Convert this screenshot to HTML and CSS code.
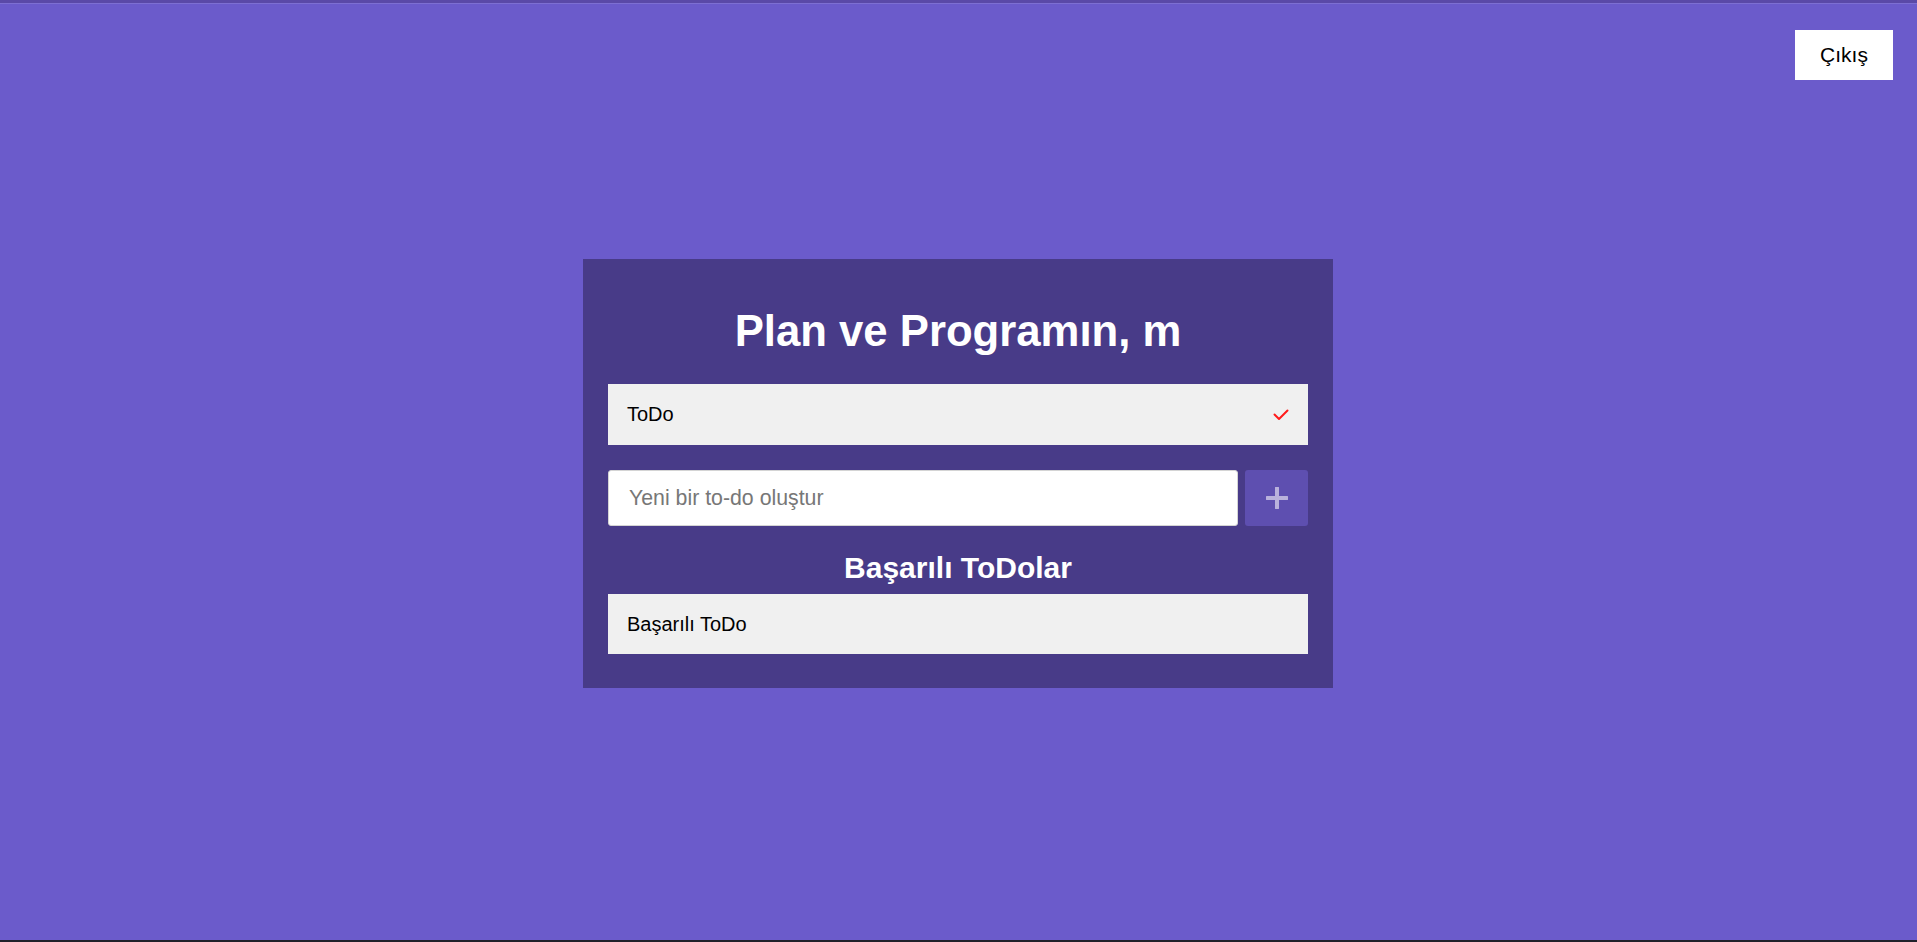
FILE: index.html
```html
<!DOCTYPE html>
<html lang="tr">
<head>
<meta charset="utf-8">
<title>Plan ve Programın</title>
<link rel="stylesheet" href="styles.css">
</head>
<body>
<div class="page">
  <header class="topbar">
    <button class="logout" type="button">Çıkış</button>
  </header>
  <main class="card">
    <h1 class="title">Plan ve Programın, m</h1>
    <div class="todo-item">
      <span class="todo-text">ToDo</span>
      <svg class="check" width="16" height="12" viewBox="0 0 16 12" aria-hidden="true">
        <path d="M1.5 5.5 L6 10 L14.5 1.5" fill="none" stroke="#ff1a1a" stroke-width="2" stroke-linecap="round" stroke-linejoin="round"/>
      </svg>
    </div>
    <form class="add-row" onsubmit="return false;">
      <input class="add-input" type="text" placeholder="Yeni bir to-do oluştur">
      <button class="add-btn" type="button" aria-label="Ekle">
        <svg width="22" height="22" viewBox="0 0 22 22" aria-hidden="true">
          <path d="M11 1 V21 M1 11 H21" stroke="#b9b1dc" stroke-width="4" stroke-linecap="round"/>
        </svg>
      </button>
    </form>
    <h2 class="subtitle">Başarılı ToDolar</h2>
    <div class="done-item">
      <span class="todo-text">Başarılı ToDo</span>
    </div>
  </main>
</div>
</body>
</html>
```

FILE: styles.css
```css
* { box-sizing: border-box; }

html, body {
  margin: 0;
  padding: 0;
}

body {
  background: #6b5bcb;
  font-family: "Liberation Sans", Arial, sans-serif;
  color: #000;
}

.page {
  height: 100vh;
  border-top: 3px solid #5a49a7;
  border-bottom: 2px solid #20202a;
  padding-top: 4px;
  padding-right: 1px;
  display: grid;
  grid-template-columns: 1fr;
  grid-template-rows: 1fr;
  box-shadow: inset 0 1px 0 #7d6fd2;
}

.topbar {
  grid-area: 1 / 1;
  justify-self: end;
  align-self: start;
  margin-top: 23px;
  margin-right: 23px;
}

.logout {
  width: 98px;
  height: 50px;
  background: #fff;
  border: none;
  border-radius: 0;
  font-family: "Liberation Sans", Arial, sans-serif;
  font-size: 21px;
  color: #000;
  padding: 0;
  cursor: pointer;
}

.card {
  grid-area: 1 / 1;
  place-self: center;
  width: 750px;
  background: #483b88;
  padding: 47px 25px 34px;
  display: flex;
  flex-direction: column;
}

.title {
  margin: 0;
  font-size: 43.7px;
  line-height: 50px;
  font-weight: bold;
  color: #fff;
  text-align: center;
}

.todo-item {
  margin-top: 28px;
  height: 61px;
  background: #f0f0f0;
  display: flex;
  align-items: center;
  justify-content: space-between;
  padding: 0 19px;
}

.todo-text {
  font-size: 20px;
  color: #000;
}

.check {
  display: block;
  margin-top: 1px;
}

.add-row {
  margin: 25px 0 0;
  display: flex;
  gap: 7px;
  height: 56px;
}

.add-input {
  flex: 1;
  height: 56px;
  border: 1px solid #d4d4d4;
  border-radius: 3px;
  background: #fff;
  padding: 0 20px;
  font-family: "Liberation Sans", Arial, sans-serif;
  font-size: 21.3px;
  color: #000;
  outline: none;
}

.add-input::placeholder {
  color: #777;
}

.add-btn {
  width: 63px;
  height: 56px;
  border: none;
  border-radius: 3px;
  background: #5e4fb0;
  display: flex;
  align-items: center;
  justify-content: center;
  padding: 0;
  cursor: pointer;
}

.add-btn svg { display: block; }

.subtitle {
  margin: 25px 0 0;
  font-size: 30px;
  line-height: 34px;
  font-weight: bold;
  color: #fff;
  text-align: center;
}

.done-item {
  margin-top: 9px;
  height: 60px;
  background: #f0f0f0;
  display: flex;
  align-items: center;
  padding: 0 19px;
}
```
